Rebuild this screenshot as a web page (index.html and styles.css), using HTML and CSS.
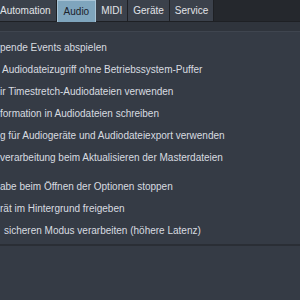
FILE: index.html
```html
<!DOCTYPE html>
<html lang="de">
<head>
    <meta charset="UTF-8">
    <title>Optionen - Audio</title>
    <link rel="stylesheet" href="styles.css">
</head>
<body>

    <div class="tabs">
        <div class="tab tab-first">Automation</div>
        <div class="tab active">Audio</div>
        <div class="tab">MIDI</div>
        <div class="tab">Geräte</div>
        <div class="tab">Service</div>
        <div class="tab-rest"></div>
    </div>

    <div class="subbar"></div>

    <div class="options">
        <div class="option">pende Events abspielen</div>
        <div class="option indent-s">Audiodateizugriff ohne Betriebssystem-Puffer</div>
        <div class="option">ir Timestretch-Audiodateien verwenden</div>
        <div class="option">formation in Audiodateien schreiben</div>
        <div class="option">g für Audiogeräte und Audiodateiexport verwenden</div>
        <div class="option">verarbeitung beim Aktualisieren der Masterdateien</div>
        <div class="option spaced">abe beim Öffnen der Optionen stoppen</div>
        <div class="option">rät im Hintergrund freigeben</div>
        <div class="option indent-m">sicheren Modus verarbeiten (höhere Latenz)</div>
    </div>

    <div class="footer"></div>

</body>
</html>
```
FILE: styles.css
```css
/* Page */
body {
    margin: 0;
    width: 300px;
    height: 300px;
    overflow: hidden;
    background: #353b45;
    font-family: "Liberation Sans", Arial, sans-serif;
    font-size: 10px;
    color: #d8dbe0;
}

/* Tab bar */
.tabs {
    display: flex;
    height: 22px;
    background: #25282d;
}

.tab {
    display: flex;
    align-items: center;
    padding: 0 5px;
    background: #3b414b;
    color: #e2e4e8;
    font-size: 10px;
    border-right: 1px solid #1e2024;
    border-bottom: 1px solid #1e2024;
}

.tab-first {
    padding-left: 0;
}

.tab.active {
    background: #7fa5bd;
    color: #1c232b;
    padding: 0 6px;
    border: 1px solid #a9c4d6;
    border-bottom: none;
}

.tab-rest {
    flex: 1;
    border-bottom: 1px solid #1e2024;
}

.subbar {
    height: 9px;
    background: #2f343c;
    border-bottom: 1px solid #3f454f;
}

/* Option rows */
.options {
    padding-top: 5px;
}

.option {
    height: 22px;
    line-height: 22px;
    white-space: nowrap;
}

.option.spaced {
    margin-top: 7px;
}

.indent-s {
    padding-left: 2px;
}

.indent-m {
    padding-left: 4px;
}

.footer {
    margin-top: 2px;
    border-top: 2px solid #2a2e35;
}
```
